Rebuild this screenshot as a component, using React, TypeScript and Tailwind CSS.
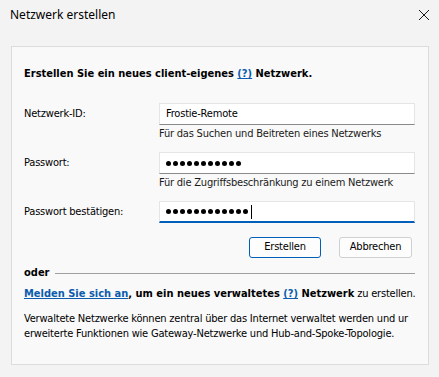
import React from 'react'

const tahoma = { fontFamily: '"DejaVu Sans Condensed", "Liberation Sans", sans-serif' }

const Dots: React.FC<{ count: number; caret?: boolean }> = ({ count, caret }) => (
  <div className="flex items-center gap-[2px]">
    {Array.from({ length: count }).map((_, i) => (
      <span key={i} className="block w-[5px] h-[5px] rounded-full bg-black" />
    ))}
    {caret && <span className="block w-px h-[14px] bg-black ml-px" />}
  </div>
)

const Field: React.FC<{ label: string; hint?: string; focused?: boolean; children: React.ReactNode; className?: string }> = ({ label, hint, focused, children, className }) => (
  <div className={className}>
    <div className="flex items-center">
      <div className="w-[135px] text-[11px] tracking-[-0.2px] text-black">{label}</div>
      <div
        className={`w-[256px] h-[22px] bg-white flex items-center pl-[6px] text-[11px] tracking-[-0.2px] text-black border border-[#e5e5e5] ${
          focused ? 'border-b-2 border-b-[#005fb8]' : 'border-b-[#8a8a8a]'
        }`}
      >
        {children}
      </div>
    </div>
    {hint && <div className="ml-[135px] mt-[2px] text-[11px] leading-[14px] tracking-[-0.2px] text-[#1a1a1a]">{hint}</div>}
  </div>
)

export default function App() {
  return (
    <div className="w-[439px] h-[377px] bg-[#f3f3f3] overflow-hidden text-black" style={tahoma}>
      <div className="h-[30px] flex items-center justify-between pl-[10px] pr-[8px]">
        <span className="text-[12px]" style={{ fontFamily: '"Noto Sans", "Open Sans", sans-serif' }}>Netzwerk erstellen</span>
        <svg width="12" height="12" viewBox="0 0 12 12" className="mr-[1px]">
          <path d="M1 1 L11 11 M11 1 L1 11" stroke="#1a1a1a" strokeWidth="1" />
        </svg>
      </div>
      <div className="ml-[11px] mr-[10px] mt-[16px] h-[319px] border border-[#dcdcdc] bg-[#f9f9f9] pl-[12px] pr-[13px] pt-[19px]">
        <div className="text-[11px] leading-[16px] font-bold whitespace-nowrap">
          Erstellen Sie ein neues client-eigenes <span className="text-[#0b5cad] underline">(?)</span> Netzwerk.
        </div>

        <Field className="mt-[21px]" label="Netzwerk-ID:" hint="Für das Suchen und Beitreten eines Netzwerks">
          Frostie-Remote
        </Field>
        <Field className="mt-[11px]" label="Passwort:" hint="Für die Zugriffsbeschränkung zu einem Netzwerk">
          <Dots count={11} />
        </Field>
        <Field className="mt-[11px]" label="Passwort bestätigen:" focused>
          <Dots count={12} caret />
        </Field>

        <div className="mt-[14px] flex justify-end gap-[18px] pr-[3px]">
          <button className="w-[72px] h-[21px] rounded-[3px] border border-[#005fb8] bg-[#fdfdfd] text-[11px] tracking-[-0.2px]">Erstellen</button>
          <button className="w-[73px] h-[21px] rounded-[3px] border border-[#d0d0d0] bg-[#fdfdfd] text-[11px] tracking-[-0.2px]">Abbrechen</button>
        </div>

        <div className="mt-[7px] flex items-center gap-[6px]">
          <span className="text-[11px] font-bold leading-[16px]">oder</span>
          <div className="flex-1 h-px bg-[#a0a0a0]" />
        </div>

        <div className="mt-[5px] text-[11px] leading-[16px] whitespace-nowrap">
          <span className="font-bold text-[#0b5cad] underline">Melden Sie sich an</span>
          <span className="font-bold">, um ein neues verwaltetes </span>
          <span className="font-bold text-[#0b5cad] underline">(?)</span>
          <span className="font-bold"> Netzwerk</span>
          <span className="tracking-[-0.2px]"> zu erstellen.</span>
        </div>

        <div className="mt-[9px] text-[11px] leading-[15px] tracking-[-0.2px] whitespace-nowrap">
          Verwaltete Netzwerke können zentral über das Internet verwaltet werden und ur
          <br />
          erweiterte Funktionen wie Gateway-Netzwerke und Hub-and-Spoke-Topologie.
        </div>
      </div>
    </div>
  )
}
